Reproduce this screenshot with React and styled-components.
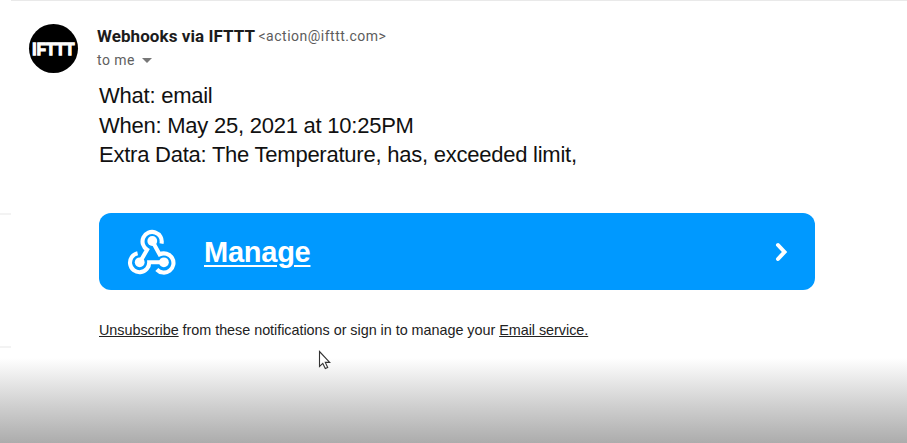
import React from "react";
import styled, { createGlobalStyle } from "styled-components";

const GlobalStyle = createGlobalStyle`
  * { box-sizing: border-box; }
  body { margin: 0; background: #fff; overflow: hidden; }
`;

const Page = styled.main`
  position: relative;
  display: grid;
  grid-template-columns: 11px 1fr;
  width: 907px;
  height: 443px;
  overflow: hidden;
  background: linear-gradient(#fff 0, #fff 358px, #ededed 376px, #d2d2d2 403px, #acacac 443px);
  color: #111;
  font-family: "Liberation Sans", Arial, sans-serif;
`;

const Gutter = styled.aside`
  display: flex;
  flex-direction: column;
  padding-top: 213px;
  gap: 131px;
`;

const GutterRule = styled.span`
  height: 2px;
  background: #f3f3f3;
`;

const Message = styled.article`
  border-top: 1px solid #e9e9e9;
  padding: 23px 0 0 18px;
`;

const Header = styled.header`
  display: flex;
  height: 49px;
  font-family: Roboto, sans-serif;
`;

const Avatar = styled.div`
  display: flex;
  align-items: center;
  justify-content: center;
  width: 49px;
  height: 49px;
  border-radius: 50%;
  background: #000;
`;

const AvatarName = styled.span`
  color: #fff;
  font: 700 15px/16px "Liberation Sans", sans-serif;
  letter-spacing: 0.3px;
  -webkit-text-stroke: 1.2px #fff;
  transform: scaleY(1.12);
`;

const Sender = styled.div`
  padding: 2px 0 0 19px;
`;

const SenderLine = styled.div`
  display: flex;
  height: 24px;
  line-height: 20px;
  white-space: nowrap;
`;

const SenderName = styled.strong`
  width: 161.5px;
  font-size: 17px;
  font-weight: 700;
  letter-spacing: 0.07px;
  color: #1c1c1c;
`;

const Address = styled.span`
  font-size: 14px;
  line-height: 21px;
  letter-spacing: 0.5px;
  color: #5c5c5c;
`;

const Recipient = styled.div`
  display: flex;
  align-items: center;
  gap: 7px;
  height: 20px;
  font-size: 14px;
  line-height: 20px;
  letter-spacing: 0.45px;
  color: #606060;
`;

const Body = styled.div`
  width: 716px;
  margin-left: 70px;
`;

const Details = styled.div`
  padding-top: 8px;
  height: 140px;
  font-size: 22px;
  line-height: 29.6px;
  letter-spacing: -0.24px;
`;

const DetailLine = styled.div`
  white-space: nowrap;
`;

const ManageButton = styled.div`
  display: flex;
  align-items: center;
  height: 77px;
  padding: 0 27px 0 28px;
  border-radius: 12px;
  background: #0099ff;
  color: #fff;
`;

const ManageLink = styled.a`
  flex: 1;
  margin-left: 27px;
  font-size: 29px;
  font-weight: 700;
  line-height: 34px;
  letter-spacing: -0.25px;
  text-decoration: underline;
  text-decoration-thickness: 2px;
  text-underline-offset: 3px;
`;

const Footer = styled.p`
  margin: 31px 0 0;
  font-size: 14.4px;
  line-height: 18px;
  letter-spacing: -0.035px;
  white-space: nowrap;
  color: #222;
`;

const FooterLink = styled.a`
  text-decoration: underline;
  text-underline-offset: 1px;
`;

const Pointer = styled.svg`
  position: absolute;
  left: 318px;
  top: 350px;
`;

const WebhookIcon = () => (
  <svg width="50" height="46" viewBox="-0.4 0 50 46" fill="none" stroke="#fff" strokeWidth="4.1">
    <path d="M12.3 33.5L19.7 20.7A9.6 9.6 0 1 1 34.1 14.6" />
    <path d="M24.9 12L32.2 25.4A9.6 9.6 0 1 1 29.4 40.5" />
    <path d="M10.2 24.2A9.6 9.6 0 1 0 21.8 33.3H36.4" />
    <g fill="#fff" stroke="none">
      <circle cx="24.9" cy="12" r="4.9" />
      <circle cx="12.3" cy="33.3" r="4.9" />
      <circle cx="36.5" cy="33.3" r="4.9" />
    </g>
  </svg>
);

export default function App() {
  return (
    <>
      <GlobalStyle />
      <Page>
        <Gutter>
          <GutterRule />
          <GutterRule />
        </Gutter>
        <Message>
          <Header>
            <Avatar>
              <AvatarName>IFTTT</AvatarName>
            </Avatar>
            <Sender>
              <SenderLine>
                <SenderName>Webhooks via IFTTT</SenderName>
                <Address>&lt;action@ifttt.com&gt;</Address>
              </SenderLine>
              <Recipient>
                to me
                <svg width="10" height="5" viewBox="0 0 10 5">
                  <path d="M0 0H10L5 5Z" fill="#777" />
                </svg>
              </Recipient>
            </Sender>
          </Header>
          <Body>
            <Details>
              <DetailLine>What: email</DetailLine>
              <DetailLine>When: May 25, 2021 at 10:25PM</DetailLine>
              <DetailLine>Extra Data: The Temperature, has, exceeded limit,</DetailLine>
            </Details>
            <ManageButton>
              <WebhookIcon />
              <ManageLink>Manage</ManageLink>
              <svg width="14" height="22" viewBox="0 0 14 22" fill="none" stroke="#fff" strokeWidth="4" strokeLinecap="round">
                <path d="M4 4L10.5 11L4 18" />
              </svg>
            </ManageButton>
            <Footer>
              <FooterLink>Unsubscribe</FooterLink> from these notifications or sign in to manage your{" "}
              <FooterLink>Email service.</FooterLink>
            </Footer>
          </Body>
        </Message>
        <Pointer width="13" height="20" viewBox="0 0 13 20">
          <path d="M1.5 1.5V16.5L4.8 13.4L7.3 18.5L9.7 17.4L7.3 12.4H11.7Z" fill="#fff" stroke="#333" strokeWidth="1.1" />
        </Pointer>
      </Page>
    </>
  );
}
